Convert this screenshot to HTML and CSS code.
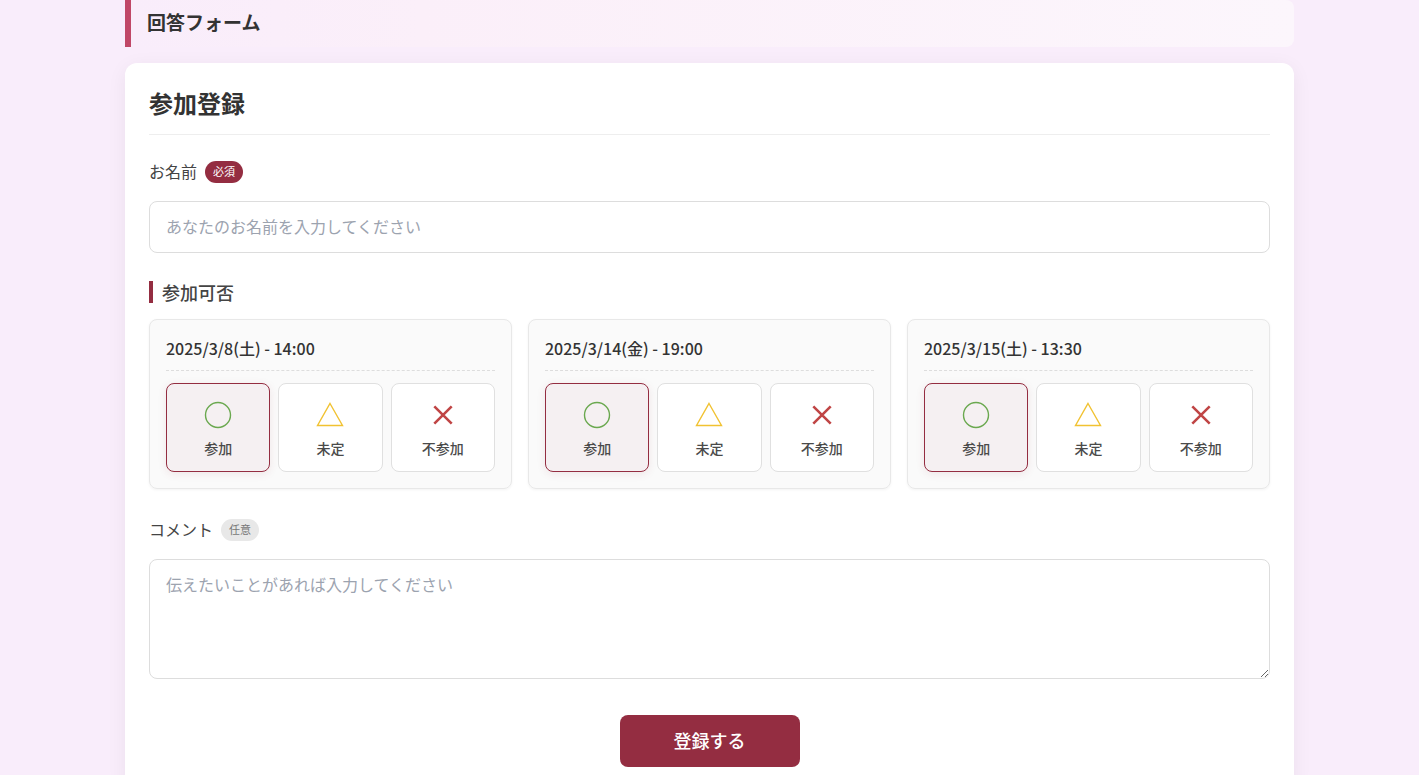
FILE: index.html
```html
<!DOCTYPE html>
<html lang="ja">
<head>
<meta charset="utf-8">
<meta name="viewport" content="width=device-width, initial-scale=1">
<title>回答フォーム</title>
<link rel="stylesheet" href="styles.css">
</head>
<body>
<svg class="sprite" aria-hidden="true">
  <symbol id="icon-circle" viewBox="0 0 32 32"><circle cx="16" cy="16" r="12.5" fill="none" stroke="currentColor" stroke-width="1.4"/></symbol>
  <symbol id="icon-triangle" viewBox="0 0 32 32"><path d="M16 4.5 28.5 26.5H3.5Z" fill="none" stroke="currentColor" stroke-width="1.4"/></symbol>
  <symbol id="icon-cross" viewBox="0 0 32 32"><path d="M7.3 7.3l17.4 17.4m0-17.4-17.4 17.4" fill="none" stroke="currentColor" stroke-width="2.6"/></symbol>
</svg>
<main class="page">
  <header class="page-header"><h1 class="page-title">回答フォーム</h1></header>
  <form class="form-card">
    <h2 class="form-title">参加登録</h2>

    <div class="field">
      <div class="field-head"><label class="field-label" for="name">お名前</label><span class="badge badge-required">必須</span></div>
      <input class="control" id="name" type="text" placeholder="あなたのお名前を入力してください" required>
    </div>

    <section class="attendance">
      <h3 class="section-title">参加可否</h3>
      <div class="dates">
        <fieldset class="date-card">
          <legend class="date-title">2025/3/8(土) - 14:00</legend>
          <div class="options">
            <label class="option"><input class="option-input" type="radio" name="d1" checked><svg class="icon icon-yes"><use href="#icon-circle"/></svg><span class="option-text">参加</span></label>
            <label class="option"><input class="option-input" type="radio" name="d1"><svg class="icon icon-maybe"><use href="#icon-triangle"/></svg><span class="option-text">未定</span></label>
            <label class="option"><input class="option-input" type="radio" name="d1"><svg class="icon icon-no"><use href="#icon-cross"/></svg><span class="option-text">不参加</span></label>
          </div>
        </fieldset>
        <fieldset class="date-card">
          <legend class="date-title">2025/3/14(金) - 19:00</legend>
          <div class="options">
            <label class="option"><input class="option-input" type="radio" name="d2" checked><svg class="icon icon-yes"><use href="#icon-circle"/></svg><span class="option-text">参加</span></label>
            <label class="option"><input class="option-input" type="radio" name="d2"><svg class="icon icon-maybe"><use href="#icon-triangle"/></svg><span class="option-text">未定</span></label>
            <label class="option"><input class="option-input" type="radio" name="d2"><svg class="icon icon-no"><use href="#icon-cross"/></svg><span class="option-text">不参加</span></label>
          </div>
        </fieldset>
        <fieldset class="date-card">
          <legend class="date-title">2025/3/15(土) - 13:30</legend>
          <div class="options">
            <label class="option"><input class="option-input" type="radio" name="d3" checked><svg class="icon icon-yes"><use href="#icon-circle"/></svg><span class="option-text">参加</span></label>
            <label class="option"><input class="option-input" type="radio" name="d3"><svg class="icon icon-maybe"><use href="#icon-triangle"/></svg><span class="option-text">未定</span></label>
            <label class="option"><input class="option-input" type="radio" name="d3"><svg class="icon icon-no"><use href="#icon-cross"/></svg><span class="option-text">不参加</span></label>
          </div>
        </fieldset>
      </div>
    </section>

    <div class="field">
      <div class="field-head"><label class="field-label" for="comment">コメント</label><span class="badge badge-optional">任意</span></div>
      <textarea class="control control-area" id="comment" placeholder="伝えたいことがあれば入力してください"></textarea>
    </div>

    <button class="submit" type="submit">登録する</button>
  </form>
</main>
</body>
</html>
```
FILE: styles.css
```css
* { box-sizing: border-box; }

html { scrollbar-width: none; }

body {
  margin: 0;
  background: #f9edfb;
  color: #333;
  font-family: "Noto Sans CJK JP", sans-serif;
  font-size: 16px;
  line-height: 26px;
}

h1, h2, h3 { margin: 0; }

.sprite { display: none; }

.page {
  max-width: 1201px;
  margin: 0 auto;
  padding: 0 16px 32px;
}

.page-header {
  margin-bottom: 16px;
  padding: 8px 16px 12px;
  border-left: 6px solid #c04767;
  border-radius: 0 8px 8px 0;
  background: linear-gradient(90deg, #f9edfb 0%, #fbeff9 25%, #fcf6fc 100%);
}

.page-title {
  font-size: 19px;
  line-height: 27px;
}

.form-card {
  display: flex;
  flex-direction: column;
  padding: 24px;
  border-radius: 12px;
  background: #fff;
  box-shadow: 0 4px 20px rgba(0, 0, 0, 0.06);
}

.form-title {
  margin-bottom: 26px;
  padding-bottom: 15px;
  border-bottom: 1px solid #eee;
  font-size: 24px;
  line-height: 32px;
}

.field {
  display: flex;
  flex-direction: column;
  gap: 18px;
}

.field-head {
  display: flex;
  align-items: center;
  gap: 8px;
  line-height: 20px;
}

.field-label {
  padding-bottom: 2px;
  color: #444;
}

.badge {
  padding: 0 8px 2px;
  border-radius: 11px;
  font-size: 11px;
}

.badge-required { background: #942d41; color: #fff; }
.badge-optional { background: #e8e8e8; color: #777; }

.control {
  width: 100%;
  height: 52px;
  padding: 11px 16px 13px;
  border: 1px solid #ddd;
  border-radius: 8px;
  background: #fff;
  color: #333;
  font: inherit;
}

.control::placeholder { color: #9ca3af; }

.control-area {
  height: 120px;
  resize: vertical;
}

.attendance { margin: 28px 0 30px; }

.section-title {
  margin-bottom: 16px;
  padding-left: 9px;
  border-left: 4px solid #942d41;
  color: #444;
  font-size: 18px;
  font-weight: 500;
  line-height: 22px;
}

.dates {
  display: grid;
  grid-template-columns: repeat(auto-fit, minmax(300px, 1fr));
  gap: 16px;
}

.date-card {
  min-width: 0;
  margin: 0;
  padding: 16px;
  border: 1px solid #e8e8e8;
  border-radius: 8px;
  background: #fafafa;
  box-shadow: 0 1px 3px rgba(0, 0, 0, 0.05);
}

.date-title {
  float: left;
  width: 100%;
  margin-bottom: 12px;
  padding: 0 0 10px;
  border-bottom: 1px dashed #ddd;
  font-weight: 500;
  line-height: 24px;
}

.options {
  clear: both;
  display: grid;
  grid-template-columns: repeat(3, 1fr);
  gap: 8px;
}

.option {
  display: flex;
  flex-direction: column;
  align-items: center;
  gap: 4px;
  padding: 12px 8px;
  border: 1px solid #e0e0e0;
  border-radius: 8px;
  background: #fff;
  cursor: pointer;
}

.option:has(:checked) {
  border-color: #942d41;
  background: #f5f0f2;
  box-shadow: 0 2px 8px rgba(148, 45, 65, 0.1);
}

.option:has(:focus-visible) { outline: 2px solid #942d41; }

.option-input {
  position: absolute;
  opacity: 0;
  pointer-events: none;
}

.icon {
  width: 32px;
  height: 38px;
}

.icon-yes { color: #6aa84f; }
.icon-maybe { color: #f1c232; }
.icon-no { color: #c04545; }

.option-text {
  color: #4a4a4a;
  font-size: 14px;
  font-weight: 500;
  line-height: 21px;
}

.submit {
  align-self: center;
  width: 180px;
  height: 52px;
  margin-top: 36px;
  padding: 0 0 2px;
  border: 0;
  border-radius: 8px;
  background: #942d41;
  color: #fff;
  font: inherit;
  font-size: 18px;
  font-weight: 500;
  cursor: pointer;
}
```
